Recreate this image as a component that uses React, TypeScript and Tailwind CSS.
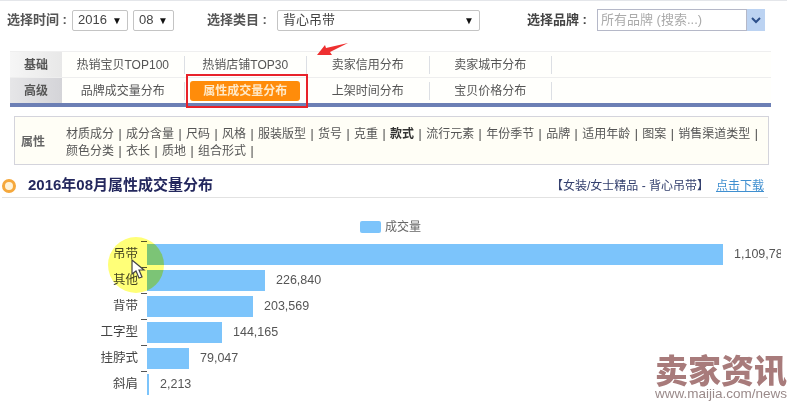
const ATTRS = ['材质成分', '成分含量', '尺码', '风格', '服装版型', '货号', '克重', '款式', '流行元素', '年份季节', '品牌', '适用年龄', '图案', '销售渠道类型'];
const ATTRS2 = ['颜色分类', '衣长', '质地', '组合形式'];

const BARS = [
  { label: '吊带', value: '1,109,78', width: 576 },
  { label: '其他', value: '226,840', width: 118 },
  { label: '背带', value: '203,569', width: 106 },
  { label: '工字型', value: '144,165', width: 75 },
  { label: '挂脖式', value: '79,047', width: 42 },
  { label: '斜肩', value: '2,213', width: 2 },
];

function Select({ text, className }: { text: string; className: string }) {
  return (
    <div className={`flex h-[21px] items-center justify-between rounded-[2px] border border-[#c4c4c4] bg-white pl-[5px] pr-[5px] text-[13px] text-[#444] ${className}`}>
      <span>{text}</span>
      <span className="text-[10px] text-[#111]">▼</span>
    </div>
  );
}

function Cell({ text, active }: { text: string; active?: boolean }) {
  return (
    <div className="flex h-[18px] w-[122.5px] items-center justify-center border-r border-[#dcdfe4] text-[12px] text-[#555]">
      {active ? (
        <span className="flex h-[20px] w-[110px] shrink-0 items-center justify-center rounded-[3px] bg-[#ff8c0a] font-bold text-[#ffe9c8]">{text}</span>
      ) : (
        text
      )}
    </div>
  );
}

function AttrLine({ items }: { items: string[] }) {
  return (
    <div className="flex h-[17px] items-center whitespace-nowrap text-[12px] text-[#555]">
      {items.map((a) => (
        <span key={a} className="flex items-center">
          <span className={a === '款式' ? 'font-bold text-[#333]' : ''}>{a}</span>
          <span className="w-[12px] text-center text-[#444]">|</span>
        </span>
      ))}
    </div>
  );
}

export default function App() {
  return (
    <div className="relative h-[405px] w-[787px] overflow-hidden bg-white font-['Liberation_Sans','Noto_Sans_CJK_SC',sans-serif] blur-[0.5px]">
      <div className="h-px bg-[#e4e6ea]" />

      {/* filter row */}
      <div className="mt-[8px] flex h-[22px] items-center pl-[7px]">
        <span className="w-[65px] text-[13px] font-bold text-[#555]">选择时间 :</span>
        <Select text="2016" className="w-[56px]" />
        <Select text="08" className="ml-[5px] w-[41px]" />
        <span className="ml-[33px] w-[70px] text-[13px] font-bold text-[#555]">选择类目 :</span>
        <Select text="背心吊带" className="w-[203px]" />
        <span className="ml-[47px] w-[70px] text-[13px] font-bold text-[#444]">选择品牌 :</span>
        <div className="flex h-[22px] w-[150px] items-center border border-[#b5b8c8] bg-white pl-[3px] text-[13px] text-[#aaa]">所有品牌 (搜索...)</div>
        <div className="flex h-[22px] w-[18px] items-center justify-center bg-[#bcd3f2]">
          <svg width="10" height="7" viewBox="0 0 10 7"><path d="M1 1l4 4 4-4" fill="none" stroke="#2c4f8a" strokeWidth="2" /></svg>
        </div>
      </div>

      {/* tabs */}
      <div className="ml-[10px] mt-[20px] w-[761px] border-b-4 border-t border-b-[#6c7fb5] border-t-[#efefef] bg-[#fffffc]">
        <div className="flex h-[26px] items-center border-b border-[#eeeeee]">
          <div className="flex h-full w-[52px] items-center justify-center bg-gradient-to-r from-[#f6f6f6] to-[#e8e8e8] text-[12px] font-bold text-[#555]">基础</div>
          <Cell text="热销宝贝TOP100" />
          <Cell text="热销店铺TOP30" />
          <Cell text="卖家信用分布" />
          <Cell text="卖家城市分布" />
        </div>
        <div className="flex h-[25px] items-center">
          <div className="flex h-full w-[52px] items-center justify-center bg-gradient-to-r from-[#e6e6e8] to-[#d4d4d8] text-[12px] font-bold text-[#555]">高级</div>
          <Cell text="品牌成交量分布" />
          <Cell text="属性成交量分布" active />
          <Cell text="上架时间分布" />
          <Cell text="宝贝价格分布" />
        </div>
      </div>

      {/* attributes */}
      <div className="ml-[14px] mt-[9px] flex h-[49px] w-[755px] items-center border border-[#d4d4dc] bg-[#fffef6]">
        <span className="w-[51px] pl-[6px] pt-[2px] text-[12px] font-bold text-[#666]">属性</span>
        <div className="pt-[4px]">
          <AttrLine items={ATTRS} />
          <AttrLine items={ATTRS2} />
        </div>
      </div>

      {/* heading */}
      <div className="ml-[2px] mt-[11px] flex h-[22px] w-[766px] items-center border-b border-[#e2e2e2] pb-[2px]">
        <span className="h-[14px] w-[14px] rounded-full border-[3px] border-[#f5a83c] bg-[#fff3d8]" />
        <span className="ml-[12px] text-[15px] font-bold text-[#24285e]">2016年08月属性成交量分布</span>
        <span className="ml-auto text-[12px] text-[#34406e]">【女装/女士精品 - 背心吊带】</span>
        <span className="ml-[7px] mr-[4px] text-[12px] text-[#3f8fd0] underline">点击下载</span>
      </div>

      {/* chart */}
      <div className="mt-[22px] flex h-[14px] items-center pl-[360px]">
        <span className="h-[12px] w-[21px] rounded-[2px] bg-[#7cc4fb]" />
        <span className="ml-[4px] text-[12px] text-[#666]">成交量</span>
      </div>
      <div className="mt-[7px] w-[781px] overflow-hidden">
        {BARS.map((b) => (
          <div key={b.label} className="flex h-[26px] items-center">
            <span className="w-[138px] shrink-0 text-right text-[12.5px] text-[#444]">{b.label}</span>
            <span className="relative h-full w-[9px] shrink-0">
              <span className="absolute right-0 top-0 h-px w-[6px] bg-[#555]" />
            </span>
            <div className="h-[21px] shrink-0 bg-[#7cc4fb]" style={{ width: b.width }} />
            <span className="ml-[11px] whitespace-nowrap text-[12.5px] text-[#555]">{b.value}</span>
          </div>
        ))}
      </div>

      {/* screen-recording overlays */}
      <div className="absolute left-[108px] top-[237px] h-[56px] w-[56px] rounded-full bg-[#ffff78] mix-blend-multiply" />
      <svg className="absolute left-[130px] top-[259px]" width="16" height="21" viewBox="0 0 16 21">
        <path d="M2 1l0 14 4-3 3 7 3-1-3-7 5 0z" fill="#fff" stroke="#444" strokeWidth="1.2" />
      </svg>
      <div className="absolute left-[186px] top-[74px] h-[34px] w-[122px] border-2 border-[#e8222a]" />
      <svg className="absolute left-[316px] top-[42px]" width="34" height="16" viewBox="0 0 34 16">
        <path d="M1 13L9 3l1 3L32 1 14 10l2 3z" fill="#ee3030" />
      </svg>

      {/* watermark */}
      <div className="absolute left-[655px] top-[356px] w-[132px] whitespace-nowrap">
        <div className="text-[33px] font-black leading-[32px] text-[#a87b7b]">卖家资讯</div>
        <div className="text-[13.5px] leading-[12px] text-[#9a8a8a]">www.maijia.com/news</div>
      </div>
    </div>
  );
}
